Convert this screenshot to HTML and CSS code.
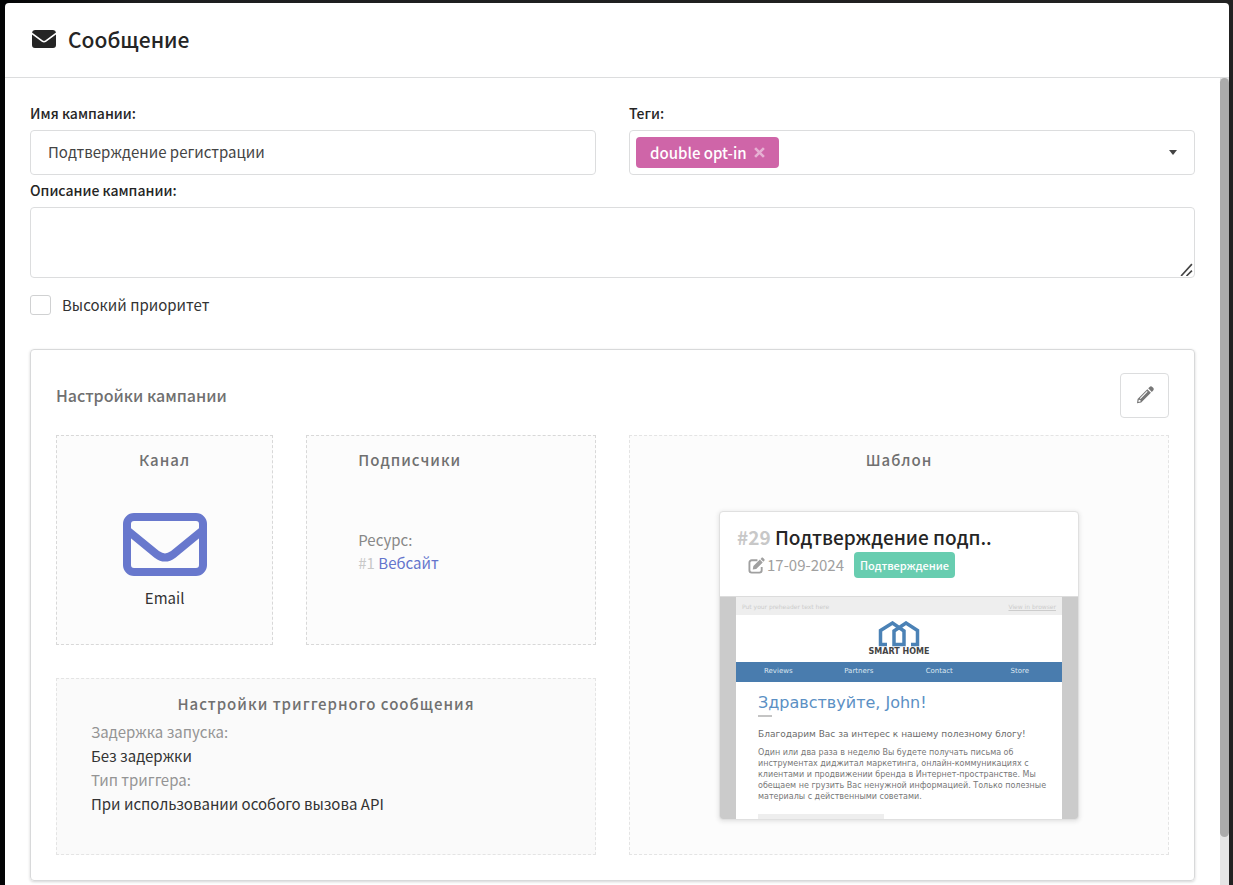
FILE: index.html
```html
<!DOCTYPE html>
<html lang="ru">
<head>
<meta charset="utf-8">
<meta name="viewport" content="width=device-width, initial-scale=1">
<title>Сообщение</title>
<link rel="stylesheet" href="styles.css">
</head>
<body class="page">
<main class="modal">
  <header class="modal-header">
    <svg class="modal-icon" viewBox="0 0 24 18" aria-hidden="true"><path fill="currentColor" d="M3 0h18a3 3 0 0 1 3 2.600L13.200 10.500a2 2 0 0 1-2.400 0L0 2.600A3 3 0 0 1 3 0zM0 4.600l9.800 7.200a3.700 3.700 0 0 0 4.400 0L24 4.600V15a3 3 0 0 1-3 3H3a3 3 0 0 1-3-3z"/></svg>
    <h1 class="modal-title">Сообщение</h1>
  </header>
  <div class="modal-body">
    <form class="content">
      <div class="field-row">
        <div class="field">
          <label class="label" for="name">Имя кампании:</label>
          <input class="control input" id="name" type="text" value="Подтверждение регистрации">
        </div>
        <div class="field">
          <label class="label" for="tags">Теги:</label>
          <div class="control tags">
            <span class="tag">double opt-in
              <button class="tag-remove" type="button" aria-label="Удалить тег"><svg class="tag-cross" viewBox="0 0 10 10"><path d="M1 1l8 8M9 1L1 9" fill="none" stroke="currentColor" stroke-width="2.400"/></svg></button>
            </span>
            <input class="tags-input" id="tags" type="text">
            <svg class="caret" viewBox="0 0 8 5" aria-hidden="true"><path fill="currentColor" d="M0 0h8L4 5z"/></svg>
          </div>
        </div>
      </div>
      <div class="field">
        <label class="label" for="description">Описание кампании:</label>
        <div class="area-wrap">
          <textarea class="control area" id="description"></textarea>
          <svg class="grip" viewBox="0 0 12 12" aria-hidden="true"><path d="M1 12L11 1M6 12l5-5" fill="none" stroke="#444" stroke-width="1.500"/></svg>
        </div>
      </div>
      <label class="check" for="priority"><input class="check-box" id="priority" type="checkbox">Высокий приоритет</label>

      <section class="card">
        <div class="card-header">
          <h2 class="card-title">Настройки кампании</h2>
          <button class="edit" type="button" aria-label="Редактировать"><svg class="edit-icon" viewBox="0 0 18 18"><path fill="currentColor" fill-rule="evenodd" d="M12.200 2.300l1.400-1.400c.8-.8 1.900-.8 2.700 0l.9.900c.8.800.8 1.900 0 2.700l-1.400 1.400zM11.300 3.200l3.600 3.600L5.200 16.500 1 17.200l.6-4.300zM10.900 5.100l-7.100 7.100.7.700 7.100-7.100zM2.700 13.700l-.3 2.200 2.200-.4-.2-1.500z"/></svg></button>
        </div>
        <div class="panels">
          <div class="panels-left">
            <div class="panel channel">
              <h3 class="panel-title">Канал</h3>
              <svg class="channel-icon" viewBox="0 0 84 64" aria-hidden="true"><rect x="4" y="4" width="76" height="55" rx="7" fill="none" stroke="currentColor" stroke-width="8"/><path d="M4 17l30 24.500q8 6 16 0L80 17" fill="none" stroke="currentColor" stroke-width="8"/></svg>
              <span>Email</span>
            </div>
            <div class="panel subscribers">
              <h3 class="panel-title">Подписчики</h3>
              <div class="resource">
                <span class="muted">Ресурс:</span>
                <span><span class="faint">#1</span> <a class="link" href="#site">Вебсайт</a></span>
              </div>
            </div>
            <div class="panel trigger">
              <h3 class="panel-title">Настройки триггерного сообщения</h3>
              <dl class="facts">
                <dt class="fact-name">Задержка запуска:</dt>
                <dd class="fact-value">Без задержки</dd>
                <dt class="fact-name">Тип триггера:</dt>
                <dd class="fact-value">При использовании особого вызова API</dd>
              </dl>
            </div>
          </div>
          <div class="panel template">
            <h3 class="panel-title">Шаблон</h3>
            <article class="mail-card">
              <div class="mail-head">
                <h4 class="mail-title"><span class="mail-id">#29</span> Подтверждение подп..</h4>
                <div class="mail-meta">
                  <svg class="mail-edit" viewBox="0 0 18 17" aria-hidden="true"><path d="M10 3H4a2.500 2.500 0 0 0-2.500 2.500v8A2.500 2.500 0 0 0 4 16h8a2.500 2.500 0 0 0 2.500-2.500V10" fill="none" stroke="currentColor" stroke-width="2"/><path fill="currentColor" d="M12.600 2.200l3 3L8.700 12.100l-3.700.7.700-3.700zM13.300 1.500l.9-.9c.6-.6 1.300-.6 1.900 0l1.100 1.100c.6.600.6 1.300 0 1.900l-.9.900z"/></svg>
                  <time datetime="2024-09-17">17-09-2024</time>
                  <span class="badge">Подтверждение</span>
                </div>
              </div>
              <div class="preview">
                <div class="sheet">
                  <div class="pre"><span>Put your preheader text here</span><a class="pre-link" href="#view">View in browser</a></div>
                  <div class="brand">
                    <svg class="brand-icon" viewBox="0 0 42 26" aria-hidden="true"><path d="M9 23.500H2.500V9.500L14.500 2l11.500 8v13.500H16V10L28 2l11.500 7.500v14H33" fill="none" stroke="currentColor" stroke-width="3.500"/></svg>
                    <span class="brand-name">SMART HOME</span>
                  </div>
                  <div class="nav"><span>Reviews</span><span>Partners</span><span>Contact</span><span>Store</span></div>
                  <div class="letter">
                    <p class="hello">Здравствуйте, John!</p>
                    <div class="rule"></div>
                    <p class="thanks">Благодарим Вас за интерес к нашему полезному блогу!</p>
                    <p class="text">Один или два раза в неделю Вы будете получать письма об<br>инструментах диджитал маркетинга, онлайн-коммуникациях с<br>клиентами и продвижении бренда в Интернет-пространстве. Мы<br>обещаем не грузить Вас ненужной информацией. Только полезные<br>материалы с действенными советами.</p>
                    <div class="block"></div>
                  </div>
                </div>
              </div>
            </article>
          </div>
        </div>
      </section>
    </form>
    <div class="scroll"><div class="scroll-thumb"></div></div>
  </div>
</main>
</body>
</html>
```
FILE: styles.css
```css
* { box-sizing: border-box; }
h1, h2, h3, h4, p, dl, dd { margin: 0; }

.page {
  margin: 0;
  height: 100vh;
  padding: 3px 4px 0 5px;
  overflow: hidden;
  background: linear-gradient(90deg, #030405 0 5px, #1d1e1f 140px, #222);
  color: #333;
  font: 400 15px/24px "Noto Sans CJK SC", "Noto Sans", sans-serif;
}
input, textarea, button { font: inherit; color: inherit; }

.modal {
  height: 100%;
  display: flex;
  flex-direction: column;
  background: #fff;
  border-radius: 4px 4px 0 0;
  overflow: hidden;
}
.modal-header {
  display: flex;
  align-items: center;
  gap: 12px;
  padding: 19px 27px 21px;
  border-bottom: 1px solid #dcddde;
  color: #252525;
}
.modal-icon { width: 24px; height: 18px; }
.modal-title { font-size: 21px; line-height: 34px; font-weight: 500; }
.modal-body { flex: 1; min-height: 0; display: flex; }
.content { flex: 1; min-width: 0; padding: 25px; }

.scroll { width: 9px; background: #e5e5e5; }
.scroll-thumb { height: 94%; border-radius: 5px; background: #ababab; }

.field-row { display: grid; grid-template-columns: 1fr 1fr; gap: 33px; margin-bottom: 5px; }
.label { display: block; margin-bottom: 7px; font-size: 14px; line-height: 20px; font-weight: 500; color: #252525; }
.control { display: block; width: 100%; border: 1px solid #dcddde; border-radius: 4px; background: #fff; }
.input { height: 45px; padding: 0 17px 2px; color: #444; }
.tags { display: flex; align-items: center; height: 45px; padding: 0 17px 0 6px; }
.tag {
  display: flex;
  align-items: center;
  gap: 7px;
  height: 31px;
  padding: 0 14px;
  border-radius: 4px;
  background: #cf65a8;
  color: #fff;
  font-weight: 500;
}
.tag-remove { display: flex; padding: 0; border: 0; background: none; color: #e6b0d3; }
.tag-cross { width: 11px; height: 11px; }
.tags-input { flex: 1; min-width: 0; border: 0; outline: 0; background: none; }
.caret { width: 8px; height: 5px; color: #444; }
.area-wrap { position: relative; }
.area { height: 71px; padding: 12px 17px; resize: none; }
.grip { position: absolute; right: 2px; bottom: 2px; width: 13px; height: 13px; }
.check { display: flex; align-items: center; gap: 11px; width: max-content; margin-top: 15px; }
.check-box {
  appearance: none;
  width: 21px;
  height: 20px;
  margin: 0;
  border: 1px solid #d0d1d2;
  border-radius: 3px;
}

.card {
  margin-top: 32px;
  padding: 23px 25px 25px;
  border: 1px solid #d8d9da;
  border-radius: 4px;
  box-shadow: 0 1px 3px #d4d4d5;
}
.card-header { display: flex; justify-content: space-between; align-items: center; margin-bottom: 17px; }
.card-title { padding-bottom: 2px; font-size: 16px; font-weight: 500; color: #707070; }
.edit {
  display: flex;
  align-items: center;
  justify-content: center;
  width: 49px;
  height: 45px;
  padding: 0 0 2px;
  border: 1px solid #dcddde;
  border-radius: 4px;
  background: #fff;
  color: #777;
}
.edit-icon { width: 18px; height: 18px; }

.panels { display: grid; grid-template-columns: 1fr 1fr; gap: 33px; }
.panels-left { display: grid; grid-template-columns: 3fr 4fr; grid-template-rows: 210px 177px; gap: 33px; }
.panel { padding: 12px 34px; border: 1px dashed #d8d8d8; background: #fcfcfc; }
.panel-title { font-size: 15px; font-weight: 500; letter-spacing: 1px; color: #707070; }
.channel, .template { display: flex; flex-direction: column; align-items: center; }
.channel-icon { width: 84px; height: 64px; margin: 41px 0 9px; color: #6878cd; }
.subscribers { padding-left: 51px; }
.resource { display: flex; flex-direction: column; margin-top: 56px; line-height: 23px; }
.muted { color: #888; }
.faint { color: #c8c8c8; }
.link { color: #6474cc; text-decoration: none; }
.trigger { grid-column: 1 / -1; padding-top: 13px; background: #fafafa; border-color: #e4e4e4; }
.trigger .panel-title { text-align: center; margin-bottom: 4px; }
.fact-name { color: #949494; }
.template { border-color: #e4e4e4; }

.mail-card {
  width: 360px;
  max-width: 100%;
  margin-top: 39px;
  border: 1px solid #e0e0e0;
  border-radius: 4px;
  background: #fff;
  box-shadow: 0 1px 5px #ddd;
  overflow: hidden;
}
.mail-head { height: 85px; padding: 12px 17px; border-bottom: 1px solid #dcdcdc; }
.mail-title { margin-bottom: 2px; font-size: 19px; line-height: 26px; font-weight: 500; color: #252525; }
.mail-id { color: #c8c8c8; font-weight: 700; }
.mail-meta { display: flex; align-items: center; padding-left: 11px; color: #a0a0a0; line-height: 26px; }
.mail-edit { width: 17px; height: 17px; margin-right: 2px; }
.badge {
  margin-left: 10px;
  padding: 0 6px;
  border-radius: 4px;
  background: #68cdb0;
  color: #fff;
  font-size: 11px;
  font-weight: 500;
}
.preview { height: 222px; padding: 0 16px; background: #cbcbcb; overflow: hidden; font: 7px/11px "DejaVu Sans", sans-serif; }
.sheet { height: 222px; background: #fff; overflow: hidden; }
.pre { display: flex; justify-content: space-between; padding: 4px 6px 3px; background: #eee; color: #ccc; font-size: 6px; }
.pre-link { color: inherit; }
.brand { display: flex; flex-direction: column; align-items: center; height: 47px; padding-top: 6px; }
.brand-icon { width: 42px; height: 26px; color: #4b82b6; }
.brand-name { font-size: 8px; line-height: 10px; color: #444; font-weight: 700; }
.nav { display: grid; grid-template-columns: repeat(4, 1fr); padding: 4px 2px 5px; background: #497cae; color: #dce7f1; text-align: center; }
.letter { padding: 10px 22px 0; color: #777; white-space: nowrap; }
.hello { font-size: 16px; line-height: 21px; color: #5b90c4; }
.rule { width: 14px; height: 2px; margin: 2px 0 10px; background: #c4c4c4; }
.thanks { font-size: 9px; line-height: 15px; color: #6c6c6c; }
.text { margin: 5px 0 12px; font-size: 8px; }
.block { width: 126px; height: 12px; background: #eee; }
```
